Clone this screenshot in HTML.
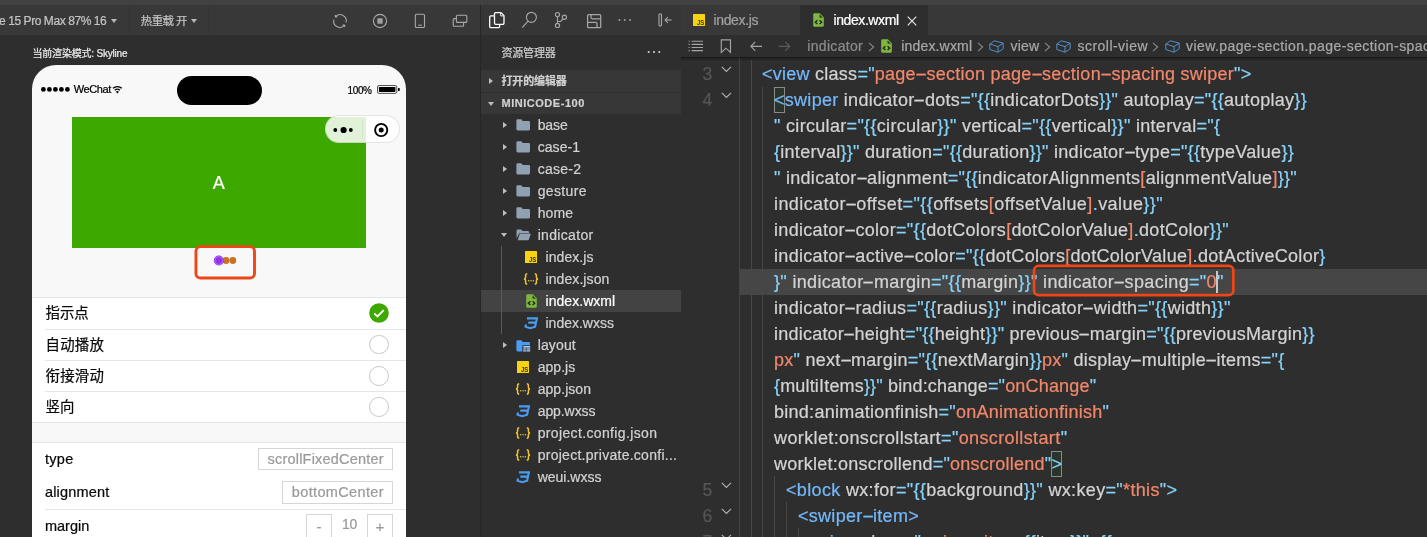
<!DOCTYPE html>
<html lang="zh-CN">
<head>
<meta charset="utf-8">
<title>indicator - index.wxml</title>
<style>
*{box-sizing:border-box;margin:0;padding:0}
html,body{width:1427px;height:537px;overflow:hidden;background:#2e2e2e}
body{position:relative;font-family:"Liberation Sans","Noto Sans CJK SC",sans-serif;color:#ccc}
#root{position:absolute;left:0;top:0;width:1427px;height:537px;will-change:transform}
.abs{position:absolute}
.t{position:absolute;white-space:pre;-webkit-text-stroke:.22px}
svg{position:absolute;overflow:visible}
/* ---------- global bars ---------- */
#topstrip{left:0;top:0;width:1427px;height:5px;background:#414141}
#simbar{left:0;top:5px;width:480px;height:30px;background:#383838}
#midbar{left:481px;top:5px;width:200px;height:30px;background:#363636}
#tabbar{left:681px;top:5px;width:746px;height:30px;background:#383838}
#tabact{left:800px;top:5px;width:128px;height:30px;background:#2e2e2e}
#vsep{left:480px;top:5px;width:1px;height:532px;background:#262626}
.sep{position:absolute;top:5px;width:1px;height:30px;background:#333}
/* ---------- simulator ---------- */
#phone{left:32px;top:65px;width:374px;height:480px;background:#f8f8f8;border-radius:24px 24px 0 0}
#island{left:176.5px;top:75.5px;width:85px;height:29.5px;border-radius:15px;background:#000}
#green{left:72px;top:117px;width:294px;height:130.5px;background:#3da900}
#capsule{left:324.5px;top:115px;width:75px;height:28px;border-radius:14px;background:rgba(255,255,255,.85);border:.7px solid rgba(0,0,0,.1)}
#capdiv{left:361.7px;top:120.5px;width:.7px;height:17px;background:rgba(0,0,0,.06)}
#redbox{left:194.5px;top:245.3px;width:61.2px;height:34.2px;border:2.3px solid #f04a19;border-radius:5.5px}
.sect{position:absolute;left:32px;width:374px;background:#fff;border-top:1px solid #e4e4e4;border-bottom:1px solid #e4e4e4}
.hl{position:absolute;left:45px;width:361px;height:1px;background:#e6e6e6}
.radio{position:absolute;left:369.2px;width:19.6px;height:19.6px;border-radius:50%;border:1px solid #c8c8c8;background:#fff}
.pick{position:absolute;border:1px solid #d6d6d6;background:#fff}
/* ---------- explorer ---------- */
.rowbg{position:absolute;left:481px;width:200px}
.arr{position:absolute;width:0;height:0}
.arr.r{border-left:4.5px solid #bdbdbd;border-top:3.3px solid transparent;border-bottom:3.3px solid transparent}
.arr.d{border-top:4.5px solid #bdbdbd;border-left:3.3px solid transparent;border-right:3.3px solid transparent}
/* ---------- editor ---------- */
#crumbs{left:681px;top:35px;width:746px;height:22px;background:#2e2e2e}
#crsh{left:681px;top:57px;width:746px;height:4px;background:linear-gradient(rgba(0,0,0,.5),rgba(0,0,0,.18) 50%,rgba(0,0,0,0))}
#curline{left:740px;top:269px;width:687px;height:25.6px;background:#464646}
.cl{-webkit-text-stroke:.22px;position:absolute;white-space:pre;line-height:26px;height:26px;font-size:18px;color:#d3d3d3}
.b{color:#75b8fa}.p{color:#86d3fa}.s{color:#f2876a}
i.h{font-style:normal;display:inline-block;width:10.5px;text-align:center;letter-spacing:0;transform:scaleX(2.05)}
.guide{position:absolute;width:1px;background:#474747}
.bm{position:absolute;border:1px solid #8a8a8a;background:#29342b}
#redbox2{left:1033px;top:264.7px;width:201.2px;height:32px;border:2.3px solid #f04a19;border-radius:5.5px}
#cursor{left:1216px;top:271px;width:1.6px;height:22px;background:#c8c8c8}
</style>
</head>
<body>
<div id="root">
<div id="topstrip" class="abs"></div>
<div id="simbar" class="abs"></div>
<div id="midbar" class="abs"></div>
<div id="tabbar" class="abs"></div>
<div id="tabact" class="abs"></div>
<div class="sep" style="left:129px"></div>
<div class="sep" style="left:208px"></div>

<!-- ============ SIMULATOR ============ -->
<div class="arr d" style="left:110.9px;top:19.3px;border-top-color:#b8b8b8;border-left-width:3.1px;border-right-width:3.1px;border-top-width:4px"></div>
<div class="arr d" style="left:190.8px;top:19.3px;border-top-color:#b8b8b8;border-left-width:3.1px;border-right-width:3.1px;border-top-width:4px"></div>
<!-- toolbar icons -->
<svg style="left:332px;top:13px" width="16" height="16" viewBox="0 0 16 16" fill="none" stroke="#a9a9a9" stroke-width="1.1"><g transform="translate(16,0) scale(-1,1)">
  <path d="M1.9 9.400A6.2 6.2 0 0 1 12.4 3.6"/><path d="M14.1 6.600A6.2 6.2 0 0 1 3.6 12.4"/>
  <path d="M10.6 3.900h2V1.9" stroke-linejoin="round"/><path d="M5.4 12.100h-2v2" stroke-linejoin="round"/>
</g></svg>
<svg style="left:372px;top:13px" width="16" height="16" viewBox="0 0 16 16">
  <circle cx="8" cy="8" r="6.6" fill="none" stroke="#a9a9a9" stroke-width="1.1"/><rect x="5.3" y="5.3" width="5.4" height="5.4" rx=".8" fill="#a0a0a0"/>
</svg>
<svg style="left:414px;top:13px" width="12" height="16" viewBox="0 0 12 16" fill="none" stroke="#a9a9a9" stroke-width="1.1">
  <rect x="1.3" y="1.3" width="9.2" height="13.2" rx="1.3"/><path d="M4.3 12.2h3.4"/>
</svg>
<svg style="left:452px;top:14px" width="16" height="14" viewBox="0 0 16 14" fill="none" stroke="#a9a9a9" stroke-width="1.1">
  <rect x="4.4" y="1.2" width="10.4" height="7.2" rx="1"/><path d="M4.4 4.6H2.2a1 1 0 0 0-1 1v5.6a1 1 0 0 0 1 1h8.4a1 1 0 0 0 1-1V8.4"/>
</svg>
<!-- phone -->
<div id="phone" class="abs"></div>
<div id="island" class="abs"></div>
<svg style="left:40px;top:85px" width="84" height="10" viewBox="0 0 84 10">
  <g fill="#000"><circle cx="3.4" cy="4.4" r="2.4"/><circle cx="9.4" cy="4.4" r="2.4"/><circle cx="15.4" cy="4.4" r="2.4"/><circle cx="21.4" cy="4.4" r="2.4"/><circle cx="27.4" cy="4.4" r="2.4"/></g>
  <g fill="none" stroke="#000" stroke-width="1.35" stroke-linecap="butt"><path d="M73 3.3a6.6 6.6 0 0 1 8.8 0"/><path d="M74.8 5.3a3.9 3.9 0 0 1 5.2 0"/></g>
  <path d="M75.9 6.7a2.2 2.2 0 0 1 3 0L77.4 8.4z" fill="#000"/>
</svg>
<svg style="left:377px;top:85px" width="24" height="9" viewBox="0 0 24 9">
  <rect x=".5" y=".5" width="19.3" height="7.9" rx="1.6" fill="none" stroke="#000" stroke-width=".9" opacity=".75"/>
  <rect x="1.9" y="1.9" width="16.5" height="5.1" rx=".7" fill="#000"/><rect x="21" y="2.9" width="1.7" height="3.1" rx=".6" fill="#000"/>
</svg>
<div id="green" class="abs"></div>
<div id="capsule" class="abs"></div>
<div id="capdiv" class="abs"></div>
<svg style="left:330px;top:122px" width="64" height="16" viewBox="0 0 64 16">
  <circle cx="5.3" cy="8" r="1.95" fill="#000"/><circle cx="13.6" cy="8" r="3.1" fill="#000"/><circle cx="20.8" cy="8" r="1.95" fill="#000"/>
  <circle cx="51.2" cy="8" r="6.1" fill="none" stroke="#000" stroke-width="1.9"/><circle cx="51.2" cy="8" r="2.5" fill="#000"/>
</svg>
<svg style="left:0;top:0" width="480" height="537"><rect x="195.95" y="246.6" width="58.55" height="31.4" rx="4.6" fill="none" stroke="#ee4616" stroke-width="2.9"/></svg>
<svg style="left:210px;top:253px" width="30" height="15" viewBox="0 0 30 15">
  <circle cx="16" cy="7.5" r="3.4" fill="#c87222"/><circle cx="22.8" cy="7.5" r="3.4" fill="#c87222"/>
  <circle cx="8.8" cy="7.5" r="5" fill="#9232e8"/><circle cx="8.8" cy="7.5" r="4" fill="none" stroke="#c39af3" stroke-width=".55"/>
</svg>
<!-- sections -->
<div class="sect" style="top:297px;height:126px"></div>
<div class="hl" style="top:329px"></div><div class="hl" style="top:360.3px"></div><div class="hl" style="top:391.3px"></div>
<div class="sect" style="top:442px;height:110px"></div>
<div class="hl" style="top:509px"></div>
<svg style="left:369px;top:303px" width="20" height="20" viewBox="0 0 20 20">
  <circle cx="10" cy="10" r="9.8" fill="#3da900"/><path d="M5.2 10.4l3.3 3.1 6.2-6.3" fill="none" stroke="#fff" stroke-width="1.8"/>
</svg>
<div class="radio" style="top:334.8px"></div><div class="radio" style="top:366px"></div><div class="radio" style="top:397.2px"></div>
<div class="pick" style="left:258px;top:448px;width:135px;height:22.4px"></div>
<div class="pick" style="left:282px;top:481px;width:111px;height:22.6px"></div>
<div class="pick" style="left:306.3px;top:514px;width:25.4px;height:30px"></div>
<div class="pick" style="left:367.3px;top:514px;width:25.7px;height:30px"></div>

<!--EXP0-->
<!-- ============ EXPLORER ============ -->
<svg style="left:489px;top:12px" width="16" height="16" viewBox="0 0 16 16" fill="none" stroke="#fff" stroke-width="1.3" stroke-linejoin="round">
  <path d="M5.5 3.800V1.800A1.2 1.2 0 0 1 6.7.6h5.300l3 3v7.500a1.2 1.2 0 0 1-1.2 1.200h-3.2"/><path d="M11.7.9v3h3" stroke-width=".9"/>
  <path d="M5.5 3.900H1.900A1.2 1.2 0 0 0 .7 5.100v9.300a1.2 1.2 0 0 0 1.2 1.200h7.500a1.2 1.2 0 0 0 1.2-1.200v-2.1"/><path d="M5.5 3.800v7.300a1.2 1.2 0 0 0 1.2 1.200h4" stroke="#fff"/>
</svg>
<svg style="left:521px;top:12px" width="16" height="16" viewBox="0 0 16 16" fill="none" stroke="#a6a6a6" stroke-width="1.15">
  <circle cx="10.4" cy="5.3" r="5"/><path d="M7 9.100L1.3 15.6"/>
</svg>
<svg style="left:553px;top:12px" width="16" height="16" viewBox="0 0 16 16" fill="none" stroke="#a6a6a6" stroke-width="1.15">
  <circle cx="4.5" cy="2.6" r="2.1"/><circle cx="4.5" cy="13.4" r="2.1"/><circle cx="11.4" cy="5.2" r="2.1"/><path d="M4.5 4.700v6.6"/><path d="M10.1 6.900L7.7 9.500H4.5"/>
</svg>
<svg style="left:586px;top:14px" width="16" height="14" viewBox="0 0 16 14" fill="none" stroke="#a6a6a6" stroke-width="1.25">
  <rect x="1.6" y=".5" width="13.1" height="13.2" rx="1"/><path d="M5 .5v3.100a1.2 1.2 0 0 0 1.2 1.200h8.5"/><path d="M1.6 8.400h8.200a1.2 1.2 0 0 1 1.2 1.200v4.1"/>
</svg>
<svg style="left:618px;top:18px" width="14" height="4" viewBox="0 0 14 4" fill="#a6a6a6"><circle cx="1.4" cy="2" r=".95"/><circle cx="6.7" cy="2" r=".95"/><circle cx="12" cy="2" r=".95"/></svg>
<svg style="left:658px;top:13px" width="15" height="14" viewBox="0 0 15 14" fill="none" stroke="#a6a6a6" stroke-width="1.15">
  <rect x="1" y="1" width="2.5" height="11.8" rx=".8"/><path d="M13.6 7H7.2"/><path d="M9.9 4.2L7.1 7l2.8 2.8"/>
</svg>
<svg style="left:647px;top:50px" width="14" height="4" viewBox="0 0 14 4" fill="#d0d0d0"><circle cx="1.7" cy="2" r="1.05"/><circle cx="7" cy="2" r="1.05"/><circle cx="12.3" cy="2" r="1.05"/></svg>
<div class="rowbg" style="top:70px;height:21.5px;background:#373737"></div>
<div class="rowbg" style="top:91.5px;height:1px;background:#313131"></div>
<div class="rowbg" style="top:92.5px;height:21.3px;background:#373737"></div>
<div class="arr r" style="left:489.3px;top:77.8px"></div>
<div class="arr d" style="left:488px;top:101.5px"></div>
<div class="rowbg" style="top:290.3px;height:21.5px;background:#434343"></div>
<div class="abs" style="left:501px;top:246px;width:1px;height:88px;background:#5a5a5a"></div>
<div class="arr r" style="left:502.500px;top:121.9px"></div>
<svg style="left:516px;top:119.3px" width="15" height="12" viewBox="0 0 15 12"><path d="M.4 1.6A1.3 1.3 0 0 1 1.7.3h3.6l1.5 1.6h5.9A1.3 1.3 0 0 1 14 3.2v6.9a1.3 1.3 0 0 1-1.3 1.3H1.7A1.3 1.3 0 0 1 .4 10.1z" fill="#8fa1b2"/></svg>
<div class="arr r" style="left:502.500px;top:143.9px"></div>
<svg style="left:516px;top:141.3px" width="15" height="12" viewBox="0 0 15 12"><path d="M.4 1.6A1.3 1.3 0 0 1 1.7.3h3.6l1.5 1.6h5.9A1.3 1.3 0 0 1 14 3.2v6.9a1.3 1.3 0 0 1-1.3 1.3H1.7A1.3 1.3 0 0 1 .4 10.1z" fill="#8fa1b2"/></svg>
<div class="arr r" style="left:502.500px;top:165.9px"></div>
<svg style="left:516px;top:163.3px" width="15" height="12" viewBox="0 0 15 12"><path d="M.4 1.6A1.3 1.3 0 0 1 1.7.3h3.6l1.5 1.6h5.9A1.3 1.3 0 0 1 14 3.2v6.9a1.3 1.3 0 0 1-1.3 1.3H1.7A1.3 1.3 0 0 1 .4 10.1z" fill="#8fa1b2"/></svg>
<div class="arr r" style="left:502.500px;top:187.9px"></div>
<svg style="left:516px;top:185.3px" width="15" height="12" viewBox="0 0 15 12"><path d="M.4 1.6A1.3 1.3 0 0 1 1.7.3h3.6l1.5 1.6h5.9A1.3 1.3 0 0 1 14 3.2v6.9a1.3 1.3 0 0 1-1.3 1.3H1.7A1.3 1.3 0 0 1 .4 10.1z" fill="#8fa1b2"/></svg>
<div class="arr r" style="left:502.500px;top:209.9px"></div>
<svg style="left:516px;top:207.3px" width="15" height="12" viewBox="0 0 15 12"><path d="M.4 1.6A1.3 1.3 0 0 1 1.7.3h3.6l1.5 1.6h5.9A1.3 1.3 0 0 1 14 3.2v6.9a1.3 1.3 0 0 1-1.3 1.3H1.7A1.3 1.3 0 0 1 .4 10.1z" fill="#8fa1b2"/></svg>
<div class="arr d" style="left:501px;top:233.4px"></div>
<svg style="left:516px;top:229.3px" width="15" height="12" viewBox="0 0 15 12"><path d="M.5 9.600V1.700A1.2 1.2 0 0 1 1.7.5h3.400l1.5 1.500h5.300a1.2 1.2 0 0 1 1.2 1.200v.7H4.300a1.5 1.5 0 0 0-1.4 1L.5 9.600z" fill="#8fa1b2"/><path d="M3.6 5.300a1 1 0 0 1 .95-.7H14a.6.6 0 0 1 .57.800l-1.7 5.200a1 1 0 0 1-.95.700H1.600z" fill="#8fa1b2"/></svg>
<svg style="left:524.8px;top:250.8px" width="12" height="12" viewBox="0 0 12 12"><rect width="12" height="12" rx=".6" fill="#f7d312"/><text x="3.9" y="11.1" font-family="Liberation Sans,sans-serif" font-weight="700" font-size="7.4" fill="#3a3200" textLength="7.3" lengthAdjust="spacingAndGlyphs">JS</text></svg>
<svg style="left:523.0px;top:273.2px" width="16" height="12" viewBox="0 0 16 12"><g fill="none" stroke="#f2c431" stroke-width="1.5"><path d="M4.2.8C2.7.8 2.6 1.7 2.6 2.700v1.600c0 1-.5 1.7-1.7 1.7 1.2 0 1.7.7 1.7 1.700v1.600c0 1 .1 1.9 1.6 1.9"/><path d="M11.8.8c1.5 0 1.6.9 1.6 1.900v1.600c0 1 .5 1.7 1.7 1.7-1.2 0-1.7.7-1.7 1.700v1.600c0 1-.1 1.9-1.6 1.9"/></g><g fill="#f2c431"><circle cx="5.6" cy="7.8" r=".75"/><circle cx="8" cy="7.8" r=".75"/><circle cx="10.4" cy="7.8" r=".75"/></g></svg>
<svg style="left:525.7px;top:294.3px" width="11" height="14" viewBox="0 0 11 14"><path d="M1.5.2h5.300l4 4v8.300a1.3 1.3 0 0 1-1.3 1.300h-8A1.3 1.3 0 0 1 .2 12.500V1.500A1.3 1.3 0 0 1 1.5.2z" fill="#7eb63f"/><path d="M6.5 1.3v2.5a.9.9 0 0 0 .9.9h2.5z" fill="#1d2b10" opacity=".85"/><path d="M4.4 7.3L2.3 9.2l2.1 1.9M6.6 7.3l2.1 1.9-2.1 1.9" fill="none" stroke="#1b2a0e" stroke-width="1.35"/></svg>
<svg style="left:524.3px;top:317.1px" width="14" height="12" viewBox="0 0 14 12"><path d="M3 1.4H12.9L12 5.6H4.3M12 5.600L11.1 9.7 6.3 11.2 1.6 9.7 2 7.5" fill="none" stroke="#4b9df3" stroke-width="2.1" stroke-linejoin="miter"/></svg>
<div class="arr r" style="left:502.500px;top:341.9px"></div>
<svg style="left:516px;top:339.5px" width="15" height="12" viewBox="0 0 15 12"><path d="M.4 1.600A1.3 1.3 0 0 1 1.7.3h3.600l1.5 1.600h5.900A1.3 1.3 0 0 1 14 3.200v6.900a1.3 1.3 0 0 1-1.3 1.300H1.700A1.3 1.3 0 0 1 .4 10.100z" fill="#4b9df3"/><rect x="6.4" y="5.2" width="8.3" height="6.6" fill="#2e2e2e"/><g fill="#a9cdf6"><rect x="7.3" y="6" width="6.9" height="1.6"/><rect x="7.3" y="8.3" width="2.6" height="1.3"/><rect x="10.5" y="8.3" width="3.7" height="1.3"/><rect x="7.3" y="10.2" width="2.6" height="1.3"/><rect x="10.5" y="10.2" width="3.7" height="1.3"/></g></svg>
<svg style="left:516.8px;top:361.2px" width="12" height="12" viewBox="0 0 12 12"><rect width="12" height="12" rx=".6" fill="#f7d312"/><text x="3.9" y="11.1" font-family="Liberation Sans,sans-serif" font-weight="700" font-size="7.4" fill="#3a3200" textLength="7.3" lengthAdjust="spacingAndGlyphs">JS</text></svg>
<svg style="left:515.0px;top:383.2px" width="16" height="12" viewBox="0 0 16 12"><g fill="none" stroke="#f2c431" stroke-width="1.5"><path d="M4.2.8C2.7.8 2.6 1.7 2.6 2.700v1.600c0 1-.5 1.7-1.7 1.7 1.2 0 1.7.7 1.7 1.700v1.600c0 1 .1 1.9 1.6 1.9"/><path d="M11.8.8c1.5 0 1.6.9 1.6 1.900v1.600c0 1 .5 1.7 1.7 1.7-1.2 0-1.7.7-1.7 1.700v1.600c0 1-.1 1.9-1.6 1.9"/></g><g fill="#f2c431"><circle cx="5.6" cy="7.8" r=".75"/><circle cx="8" cy="7.8" r=".75"/><circle cx="10.4" cy="7.8" r=".75"/></g></svg>
<svg style="left:516.3px;top:405.1px" width="14" height="12" viewBox="0 0 14 12"><path d="M3 1.4H12.9L12 5.6H4.3M12 5.600L11.1 9.7 6.3 11.2 1.6 9.7 2 7.5" fill="none" stroke="#4b9df3" stroke-width="2.1" stroke-linejoin="miter"/></svg>
<svg style="left:515.0px;top:427.2px" width="16" height="12" viewBox="0 0 16 12"><g fill="none" stroke="#f2c431" stroke-width="1.5"><path d="M4.2.8C2.7.8 2.6 1.7 2.6 2.700v1.600c0 1-.5 1.7-1.7 1.7 1.2 0 1.7.7 1.7 1.700v1.600c0 1 .1 1.9 1.6 1.9"/><path d="M11.8.8c1.5 0 1.6.9 1.6 1.900v1.600c0 1 .5 1.7 1.7 1.7-1.2 0-1.7.7-1.7 1.700v1.600c0 1-.1 1.9-1.6 1.9"/></g><g fill="#f2c431"><circle cx="5.6" cy="7.8" r=".75"/><circle cx="8" cy="7.8" r=".75"/><circle cx="10.4" cy="7.8" r=".75"/></g></svg>
<svg style="left:515.0px;top:449.2px" width="16" height="12" viewBox="0 0 16 12"><g fill="none" stroke="#f2c431" stroke-width="1.5"><path d="M4.2.8C2.7.8 2.6 1.7 2.6 2.700v1.600c0 1-.5 1.7-1.7 1.7 1.2 0 1.7.7 1.7 1.700v1.600c0 1 .1 1.9 1.6 1.9"/><path d="M11.8.8c1.5 0 1.6.9 1.6 1.900v1.600c0 1 .5 1.7 1.7 1.7-1.2 0-1.7.7-1.7 1.700v1.600c0 1-.1 1.9-1.6 1.9"/></g><g fill="#f2c431"><circle cx="5.6" cy="7.8" r=".75"/><circle cx="8" cy="7.8" r=".75"/><circle cx="10.4" cy="7.8" r=".75"/></g></svg>
<svg style="left:516.3px;top:471.1px" width="14" height="12" viewBox="0 0 14 12"><path d="M3 1.4H12.9L12 5.6H4.3M12 5.600L11.1 9.7 6.3 11.2 1.6 9.7 2 7.5" fill="none" stroke="#4b9df3" stroke-width="2.1" stroke-linejoin="miter"/></svg>
<!--EXP1-->
<!--ED0-->
<!-- ============ EDITOR ============ -->
<div id="crumbs" class="abs"></div>
<svg style="left:692.8px;top:14.2px" width="12" height="12" viewBox="0 0 12 12"><rect width="12" height="12" rx=".6" fill="#f7d312"/><text x="3.9" y="11.1" font-family="Liberation Sans,sans-serif" font-weight="700" font-size="7.4" fill="#3a3200" textLength="7.3" lengthAdjust="spacingAndGlyphs">JS</text></svg>
<svg style="left:813.2px;top:13.4px" width="11" height="14" viewBox="0 0 11 14"><path d="M1.5.2h5.300l4 4v8.300a1.3 1.3 0 0 1-1.3 1.300h-8A1.3 1.3 0 0 1 .2 12.500V1.500A1.3 1.3 0 0 1 1.5.2z" fill="#7eb63f"/><path d="M6.5 1.3v2.5a.9.9 0 0 0 .9.9h2.5z" fill="#1d2b10" opacity=".85"/><path d="M4.4 7.3L2.3 9.2l2.1 1.9M6.6 7.3l2.1 1.9-2.1 1.9" fill="none" stroke="#1b2a0e" stroke-width="1.35"/></svg>
<svg style="left:907px;top:15.5px" width="10" height="10" viewBox="0 0 10 10" fill="none" stroke="#e6e6e6" stroke-width="1.15"><path d="M.7.7l8.6 8.600M9.3.7L.7 9.3"/></svg>
<svg style="left:688px;top:40px" width="16" height="12" viewBox="0 0 16 12" fill="none" stroke="#a4a4a4" stroke-width="1.1"><path d="M3.6 1.300H15M3.6 4.400H15M3.6 7.500H15M3.6 10.600H15"/><path d="M.6 1.300h1.100M.6 4.400h1.100M.6 7.500h1.100M.6 10.600h1.1"/></svg>
<svg style="left:720px;top:39px" width="12" height="15" viewBox="0 0 12 15" fill="none" stroke="#a4a4a4" stroke-width="1.15" stroke-linejoin="miter"><path d="M1.3.9h9.200v12.600L5.9 9.2 1.3 13.500z"/></svg>
<svg style="left:750px;top:41px" width="13" height="11" viewBox="0 0 13 11" fill="none" stroke="#a4a4a4" stroke-width="1.15"><path d="M12 5.300H1M5.3.8L.9 5.300l4.4 4.5"/></svg>
<svg style="left:778px;top:41px" width="13" height="11" viewBox="0 0 13 11" fill="none" stroke="#5c5c5c" stroke-width="1.15"><path d="M.6 5.300h11M7.3.8l4.4 4.5-4.4 4.5"/></svg>
<svg style="left:867.5px;top:41.5px" width="7" height="10" viewBox="0 0 7 10" fill="none" stroke="#8a8a8a" stroke-width="1.1"><path d="M1 .8l4.6 4.200L1 9.2"/></svg>
<svg style="left:976.5px;top:41.5px" width="7" height="10" viewBox="0 0 7 10" fill="none" stroke="#8a8a8a" stroke-width="1.1"><path d="M1 .8l4.6 4.200L1 9.2"/></svg>
<svg style="left:1044px;top:41.5px" width="7" height="10" viewBox="0 0 7 10" fill="none" stroke="#8a8a8a" stroke-width="1.1"><path d="M1 .8l4.6 4.200L1 9.2"/></svg>
<svg style="left:1152px;top:41.5px" width="7" height="10" viewBox="0 0 7 10" fill="none" stroke="#8a8a8a" stroke-width="1.1"><path d="M1 .8l4.6 4.200L1 9.2"/></svg>
<svg style="left:881.3px;top:39.2px" width="11" height="14" viewBox="0 0 11 14"><path d="M1.5.2h5.300l4 4v8.300a1.3 1.3 0 0 1-1.3 1.300h-8A1.3 1.3 0 0 1 .2 12.500V1.500A1.3 1.3 0 0 1 1.5.2z" fill="#7eb63f"/><path d="M6.5 1.3v2.5a.9.9 0 0 0 .9.9h2.5z" fill="#1d2b10" opacity=".85"/><path d="M4.4 7.3L2.3 9.2l2.1 1.9M6.6 7.3l2.1 1.9-2.1 1.9" fill="none" stroke="#1b2a0e" stroke-width="1.35"/></svg>
<svg style="left:988.5px;top:39.8px" width="15" height="13" viewBox="0 0 15 13" fill="none" stroke="#5792cf" stroke-width=".95" stroke-linejoin="round"><path d="M5.3.8l8.9 2.400v5.600l-5.2 3.400L.8 9.400V4z"/><path d="M.8 4l8.2 2.6 5.2-3.400M9 6.600v5.6"/></svg>
<svg style="left:1055.5px;top:39.8px" width="15" height="13" viewBox="0 0 15 13" fill="none" stroke="#5792cf" stroke-width=".95" stroke-linejoin="round"><path d="M5.3.8l8.9 2.400v5.600l-5.2 3.400L.8 9.400V4z"/><path d="M.8 4l8.2 2.6 5.2-3.400M9 6.600v5.6"/></svg>
<svg style="left:1164.5px;top:39.8px" width="15" height="13" viewBox="0 0 15 13" fill="none" stroke="#5792cf" stroke-width=".95" stroke-linejoin="round"><path d="M5.3.8l8.9 2.400v5.600l-5.2 3.400L.8 9.400V4z"/><path d="M.8 4l8.2 2.6 5.2-3.400M9 6.600v5.6"/></svg>
<div id="curline" class="abs"></div>
<div class="guide" style="left:739px;top:57px;height:480px;background:#444"></div>
<div class="guide" style="left:751px;top:60px;height:477px"></div>
<div class="guide" style="left:762px;top:87px;height:450px"></div>
<div class="guide" style="left:774px;top:476px;height:61px"></div>
<div class="guide" style="left:786px;top:502px;height:35px"></div>
<div class="guide" style="left:798px;top:528px;height:9px"></div>
<svg style="left:721px;top:66.3px" width="11" height="7" viewBox="0 0 11 7" fill="none" stroke="#b2b2b2" stroke-width="1.1"><path d="M.8.9l4.6 4.6L10 .9"/></svg>
<svg style="left:721px;top:92.3px" width="11" height="7" viewBox="0 0 11 7" fill="none" stroke="#b2b2b2" stroke-width="1.1"><path d="M.8.9l4.6 4.6L10 .9"/></svg>
<svg style="left:721px;top:482.3px" width="11" height="7" viewBox="0 0 11 7" fill="none" stroke="#b2b2b2" stroke-width="1.1"><path d="M.8.9l4.6 4.6L10 .9"/></svg>
<svg style="left:721px;top:508.3px" width="11" height="7" viewBox="0 0 11 7" fill="none" stroke="#b2b2b2" stroke-width="1.1"><path d="M.8.9l4.6 4.6L10 .9"/></svg>
<svg style="left:721px;top:534.3px" width="11" height="7" viewBox="0 0 11 7" fill="none" stroke="#b2b2b2" stroke-width="1.1"><path d="M.8.9l4.6 4.6L10 .9"/></svg>
<div class="bm" style="left:774px;top:87.300px;width:10.800px;height:25.400px"></div>
<div class="bm" style="left:1051px;top:451.300px;width:10.800px;height:25.400px"></div>
<!--ED1-->
<div id="vsep" class="abs"></div>
<div class="cl" id="c0" style="left:762px;top:61px;letter-spacing:0.258px;"><span class="b">&lt;view</span> class<span class="p">="</span><span class="s">page<i class="h">-</i>section page<i class="h">-</i>section<i class="h">-</i>spacing swiper</span><span class="p">"&gt;</span></div>
<div class="cl" id="c1" style="left:774px;top:87px;letter-spacing:0.287px;"><span class="b">&lt;swiper</span> indicator<i class="h">-</i>dots<span class="p">="{{</span>indicatorDots<span class="p">}}"</span> autoplay<span class="p">="{{</span>autoplay<span class="p">}}</span></div>
<div class="cl" id="c2" style="left:774px;top:113px;letter-spacing:0.315px;"><span class="p">"</span> circular<span class="p">="{{</span>circular<span class="p">}}"</span> vertical<span class="p">="{{</span>vertical<span class="p">}}"</span> interval<span class="p">="{</span></div>
<div class="cl" id="c3" style="left:774px;top:139px;letter-spacing:0.273px;"><span class="p">{</span>interval<span class="p">}}"</span> duration<span class="p">="{{</span>duration<span class="p">}}"</span> indicator<i class="h">-</i>type<span class="p">="{{</span>typeValue<span class="p">}}</span></div>
<div class="cl" id="c4" style="left:774px;top:165px;letter-spacing:0.287px;"><span class="p">"</span> indicator<i class="h">-</i>alignment<span class="p">="{{</span>indicatorAlignments<span class="s">[</span>alignmentValue<span class="s">]</span><span class="p">}}"</span></div>
<div class="cl" id="c5" style="left:774px;top:191px;letter-spacing:0.421px;">indicator<i class="h">-</i>offset<span class="p">="{{</span>offsets<span class="s">[</span>offsetValue<span class="s">]</span><span class="p">.</span>value<span class="p">}}"</span></div>
<div class="cl" id="c6" style="left:774px;top:217px;letter-spacing:0.318px;">indicator<i class="h">-</i>color<span class="p">="{{</span>dotColors<span class="s">[</span>dotColorValue<span class="s">]</span><span class="p">.</span>dotColor<span class="p">}}"</span></div>
<div class="cl" id="c7" style="left:774px;top:243px;letter-spacing:0.308px;">indicator<i class="h">-</i>active<i class="h">-</i>color<span class="p">="{{</span>dotColors<span class="s">[</span>dotColorValue<span class="s">]</span><span class="p">.</span>dotActiveColor<span class="p">}</span></div>
<div class="cl" id="c8" style="left:774px;top:269px;letter-spacing:0.334px;"><span class="p">}"</span> indicator<i class="h">-</i>margin<span class="p">="{{</span>margin<span class="p">}}"</span> indicator<i class="h">-</i>spacing<span class="p">="</span><span class="s">0</span><span class="p">"</span></div>
<div class="cl" id="c9" style="left:774px;top:295px;letter-spacing:0.323px;">indicator<i class="h">-</i>radius<span class="p">="{{</span>radius<span class="p">}}"</span> indicator<i class="h">-</i>width<span class="p">="{{</span>width<span class="p">}}"</span></div>
<div class="cl" id="c10" style="left:774px;top:321px;letter-spacing:0.225px;">indicator<i class="h">-</i>height<span class="p">="{{</span>height<span class="p">}}"</span> previous<i class="h">-</i>margin<span class="p">="{{</span>previousMargin<span class="p">}}</span></div>
<div class="cl" id="c11" style="left:774px;top:347px;letter-spacing:0.265px;"><span class="s">px</span><span class="p">"</span> next<i class="h">-</i>margin<span class="p">="{{</span>nextMargin<span class="p">}}</span><span class="s">px</span><span class="p">"</span> display<i class="h">-</i>multiple<i class="h">-</i>items<span class="p">="{</span></div>
<div class="cl" id="c12" style="left:774px;top:373px;letter-spacing:0.169px;"><span class="p">{</span>multiItems<span class="p">}}"</span> bind:change<span class="p">="</span><span class="s">onChange</span><span class="p">"</span></div>
<div class="cl" id="c13" style="left:774px;top:399px;letter-spacing:0.269px;">bind:animationfinish<span class="p">="</span><span class="s">onAnimationfinish</span><span class="p">"</span></div>
<div class="cl" id="c14" style="left:774px;top:425px;letter-spacing:0.378px;">worklet:onscrollstart<span class="p">="</span><span class="s">onscrollstart</span><span class="p">"</span></div>
<div class="cl" id="c15" style="left:774px;top:451px;letter-spacing:0.244px;">worklet:onscrollend<span class="p">="</span><span class="s">onscrollend</span><span class="p">"&gt;</span></div>
<div class="cl" id="c16" style="left:786px;top:477px;letter-spacing:0.337px;"><span class="b">&lt;block</span> wx:for<span class="p">="{{</span>background<span class="p">}}"</span> wx:key<span class="p">="</span><span class="s">*this</span><span class="p">"&gt;</span></div>
<div class="cl" id="c17" style="left:798px;top:503px;letter-spacing:0.286px;"><span class="b">&lt;swiper<i class="h">-</i>item&gt;</span></div>
<div class="cl" id="c18" style="left:810px;top:529px;letter-spacing:0.111px;"><span class="b">&lt;view</span> class<span class="p">="</span><span class="s">swiper<i class="h">-</i>item </span><span class="p">{{</span>item<span class="p">}}"</span><span class="b">&gt;</span><span class="p">{{</span></div>
<svg style="left:0;top:0" width="1427" height="537"><rect x="1034.05" y="265.85" width="199.3" height="29.3" rx="4.6" fill="none" stroke="#ee4616" stroke-width="2.7"/></svg>
<div id="cursor" class="abs"></div>
<div id="crsh" class="abs"></div>
<span class="t" id="t0" style="left:-1.00px;top:12.94px;font-size:12px;line-height:16.8px;color:#c4c4c4;letter-spacing:-0.428px;">e 15 Pro Max 87% 16</span>
<span class="t" id="t1" style="left:140.80px;top:13.27px;font-size:11.5px;line-height:16.1px;color:#c4c4c4;letter-spacing:-0.626px;">热重载 开</span>
<span class="t" id="t2" style="left:32.50px;top:46.83px;font-size:10px;line-height:14.0px;color:#ececec;letter-spacing:-0.200px;">当前渲染模式: Skyline</span>
<span class="t" id="t3" style="left:73.70px;top:82.29px;font-size:11px;line-height:15.4px;color:#000;letter-spacing:-0.389px;">WeChat</span>
<span class="t" id="t4" style="left:347.50px;top:84.33px;font-size:10px;line-height:14.0px;color:#000;letter-spacing:-0.359px;">100%</span>
<span class="t" id="t5" style="left:212.80px;top:171.36px;font-size:18px;line-height:25.2px;color:#fff;">A</span>
<span class="t" id="t6" style="left:45.50px;top:303.43px;font-size:14.4px;line-height:20.16px;color:#0a0a0a;letter-spacing:0.006px;">指示点</span>
<span class="t" id="t7" style="left:45.50px;top:334.73px;font-size:14.4px;line-height:20.16px;color:#0a0a0a;letter-spacing:0.241px;">自动播放</span>
<span class="t" id="t8" style="left:45.50px;top:366.03px;font-size:14.4px;line-height:20.16px;color:#0a0a0a;letter-spacing:0.241px;">衔接滑动</span>
<span class="t" id="t9" style="left:45.50px;top:397.33px;font-size:14.4px;line-height:20.16px;color:#0a0a0a;letter-spacing:0.203px;">竖向</span>
<span class="t" id="t10" style="left:45.00px;top:448.73px;font-size:14.5px;line-height:20.3px;color:#0a0a0a;letter-spacing:0.293px;">type</span>
<span class="t" id="t11" style="left:45.00px;top:482.13px;font-size:14.5px;line-height:20.3px;color:#0a0a0a;letter-spacing:0.166px;">alignment</span>
<span class="t" id="t12" style="left:45.00px;top:516.23px;font-size:14.5px;line-height:20.3px;color:#0a0a0a;letter-spacing:-0.026px;">margin</span>
<span class="t" id="t13" style="left:267.60px;top:448.93px;font-size:14.5px;line-height:20.3px;color:#9a9a9a;letter-spacing:0.198px;">scrollFixedCenter</span>
<span class="t" id="t14" style="left:291.80px;top:482.13px;font-size:14.5px;line-height:20.3px;color:#9a9a9a;letter-spacing:0.358px;">bottomCenter</span>
<span class="t" id="t15" style="left:316.50px;top:515.90px;font-size:15px;line-height:21.0px;color:#9a9a9a;">-</span>
<span class="t" id="t16" style="left:342.00px;top:514.85px;font-size:14px;line-height:19.6px;color:#9a9a9a;letter-spacing:-0.178px;">10</span>
<span class="t" id="t17" style="left:375.50px;top:516.40px;font-size:15px;line-height:21.0px;color:#9a9a9a;">+</span>
<span class="t" id="t18" style="left:501.50px;top:46.49px;font-size:11px;line-height:15.4px;color:#cfcfcf;letter-spacing:-0.200px;">资源管理器</span>
<span class="t" id="t19" style="left:501.50px;top:74.49px;font-size:11px;line-height:15.4px;color:#d0d0d0;font-weight:700;letter-spacing:-0.140px;">打开的编辑器</span>
<span class="t" id="t20" style="left:501.50px;top:96.29px;font-size:11px;line-height:15.4px;color:#d0d0d0;font-weight:700;letter-spacing:0.524px;">MINICODE-100</span>
<span class="t" id="t21" style="left:537.70px;top:116.05px;font-size:14px;line-height:19.6px;color:#d2d2d2;letter-spacing:-0.120px;">base</span>
<span class="t" id="t22" style="left:537.70px;top:138.05px;font-size:14px;line-height:19.6px;color:#d2d2d2;letter-spacing:0.054px;">case-1</span>
<span class="t" id="t23" style="left:537.70px;top:160.05px;font-size:14px;line-height:19.6px;color:#d2d2d2;letter-spacing:0.254px;">case-2</span>
<span class="t" id="t24" style="left:537.70px;top:182.05px;font-size:14px;line-height:19.6px;color:#d2d2d2;letter-spacing:0.349px;">gesture</span>
<span class="t" id="t25" style="left:537.70px;top:204.05px;font-size:14px;line-height:19.6px;color:#d2d2d2;letter-spacing:0.090px;">home</span>
<span class="t" id="t26" style="left:537.70px;top:226.05px;font-size:14px;line-height:19.6px;color:#d2d2d2;letter-spacing:0.322px;">indicator</span>
<span class="t" id="t27" style="left:545.50px;top:248.05px;font-size:14px;line-height:19.6px;color:#d2d2d2;letter-spacing:0.076px;">index.js</span>
<span class="t" id="t28" style="left:545.50px;top:270.05px;font-size:14px;line-height:19.6px;color:#d2d2d2;letter-spacing:0.084px;">index.json</span>
<span class="t" id="t29" style="left:545.50px;top:292.05px;font-size:14px;line-height:19.6px;color:#ffffff;letter-spacing:0.050px;">index.wxml</span>
<span class="t" id="t30" style="left:545.50px;top:314.05px;font-size:14px;line-height:19.6px;color:#d2d2d2;">index.wxss</span>
<span class="t" id="t31" style="left:537.70px;top:336.05px;font-size:14px;line-height:19.6px;color:#d2d2d2;letter-spacing:0.128px;">layout</span>
<span class="t" id="t32" style="left:537.70px;top:358.05px;font-size:14px;line-height:19.6px;color:#d2d2d2;letter-spacing:0.028px;">app.js</span>
<span class="t" id="t33" style="left:537.70px;top:380.05px;font-size:14px;line-height:19.6px;color:#d2d2d2;letter-spacing:0.052px;">app.json</span>
<span class="t" id="t34" style="left:537.70px;top:402.05px;font-size:14px;line-height:19.6px;color:#d2d2d2;letter-spacing:-0.080px;">app.wxss</span>
<span class="t" id="t35" style="left:537.70px;top:424.05px;font-size:14px;line-height:19.6px;color:#d2d2d2;letter-spacing:0.359px;">project.config.json</span>
<span class="t" id="t36" style="left:537.70px;top:446.05px;font-size:14px;line-height:19.6px;color:#d2d2d2;letter-spacing:0.271px;">project.private.confi...</span>
<span class="t" id="t37" style="left:537.70px;top:468.05px;font-size:14px;line-height:19.6px;color:#d2d2d2;">weui.wxss</span>
<span class="t" id="t38" style="left:713.50px;top:11.35px;font-size:14px;line-height:19.6px;color:#a2a2a2;letter-spacing:-0.353px;">index.js</span>
<span class="t" id="t39" style="left:833.50px;top:11.35px;font-size:14px;line-height:19.6px;color:#ffffff;letter-spacing:-0.417px;">index.wxml</span>
<span class="t" id="t40" style="left:807.30px;top:37.15px;font-size:14px;line-height:19.6px;color:#8c8c8c;letter-spacing:0.310px;">indicator</span>
<span class="t" id="t41" style="left:901.30px;top:37.15px;font-size:14px;line-height:19.6px;color:#a8a8a8;letter-spacing:0.161px;">index.wxml</span>
<span class="t" id="t42" style="left:1010.50px;top:37.15px;font-size:14px;line-height:19.6px;color:#a8a8a8;letter-spacing:0.161px;">view</span>
<span class="t" id="t43" style="left:1077.50px;top:37.15px;font-size:14px;line-height:19.6px;color:#a8a8a8;letter-spacing:0.466px;">scroll-view</span>
<span class="t" id="t44" style="left:1186.00px;top:37.15px;font-size:14px;line-height:19.6px;color:#a8a8a8;letter-spacing:0.424px;">view.page-section.page-section-spac</span>
<span class="t" id="t45" style="left:702.60px;top:61.89px;font-size:17.5px;line-height:24.5px;color:#555555;">3</span>
<span class="t" id="t46" style="left:702.60px;top:87.89px;font-size:17.5px;line-height:24.5px;color:#555555;">4</span>
<span class="t" id="t47" style="left:702.60px;top:477.89px;font-size:17.5px;line-height:24.5px;color:#555555;">5</span>
<span class="t" id="t48" style="left:702.60px;top:503.89px;font-size:17.5px;line-height:24.5px;color:#555555;">6</span>
<span class="t" id="t49" style="left:702.60px;top:529.89px;font-size:17.5px;line-height:24.5px;color:#555555;">7</span>
</div>
</body>
</html>
